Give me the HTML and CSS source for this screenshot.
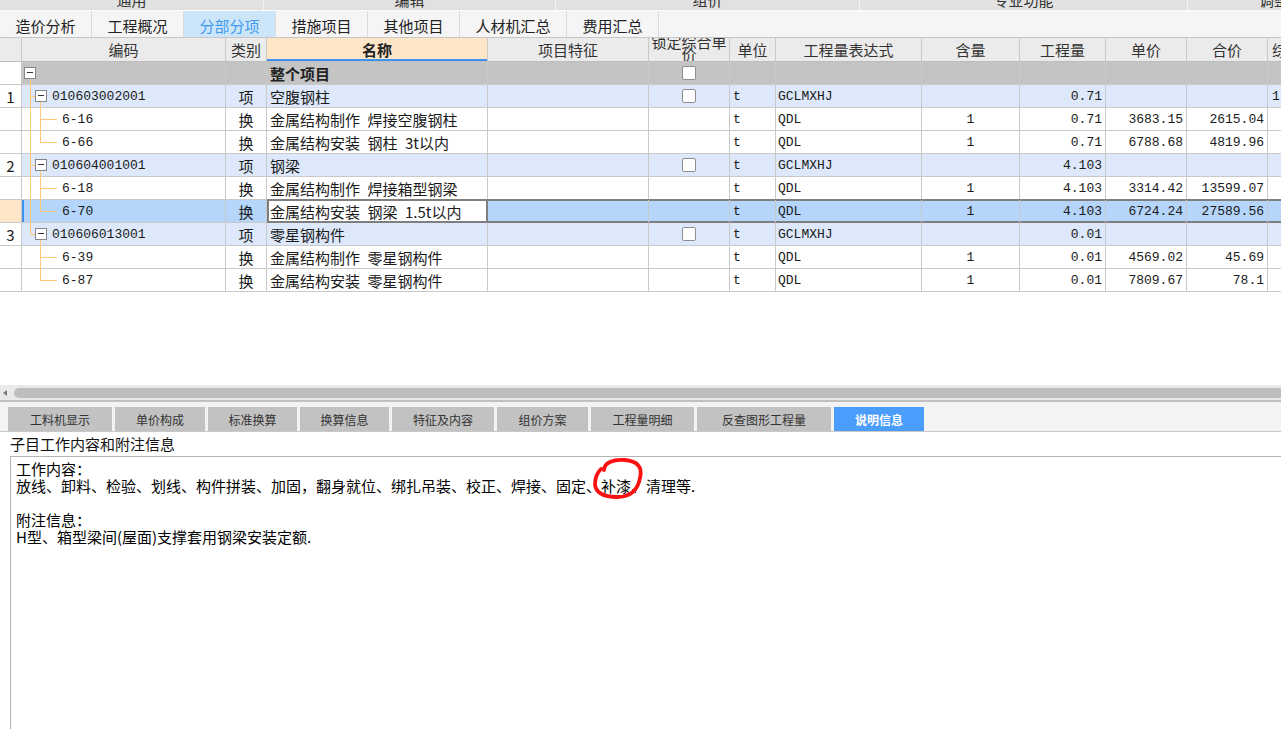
FILE: index.html
```html
<!DOCTYPE html>
<html lang="zh-CN">
<head>
<meta charset="utf-8">
<title>分部分项</title>
<link rel="stylesheet" href="styles.css">
</head>
<body>
<div class="app">
  <div class="ribbon">
    <div class="rg rg1"><span>通用</span></div>
    <div class="rg rg2"><span>编辑</span></div>
    <div class="rg rg3"><span>组价</span></div>
    <div class="rg rg4"><span>专业功能</span></div>
    <div class="rg rg5"><span>调整</span></div>
  </div>

  <div class="tabs">
    <div class="tab">造价分析</div>
    <div class="tab">工程概况</div>
    <div class="tab on">分部分项</div>
    <div class="tab">措施项目</div>
    <div class="tab">其他项目</div>
    <div class="tab wide">人材机汇总</div>
    <div class="tab">费用汇总</div>
  </div>

  <div class="grid">
    <div class="row head">
      <div class="c n"></div>
      <div class="c ctr">编码</div>
      <div class="c ctr">类别</div>
      <div class="c ctr hl">名称</div>
      <div class="c ctr">项目特征</div>
      <div class="c ctr lockh"><span>锁定综合单价</span></div>
      <div class="c ctr">单位</div>
      <div class="c ctr">工程量表达式</div>
      <div class="c ctr">含量</div>
      <div class="c ctr">工程量</div>
      <div class="c ctr">单价</div>
      <div class="c ctr">合价</div>
      <div class="c x">综合单价</div>
    </div>

    <div class="row r-root">
      <div class="c n"></div>
      <div class="c code"><i class="box rootbox"></i><i class="tl v1 from-root"></i></div>
      <div class="c"></div>
      <div class="c l"><b class="bold">整个项目</b></div>
      <div class="c"></div>
      <div class="c ctr"><i class="cb"></i></div>
      <div class="c"></div>
      <div class="c"></div>
      <div class="c"></div>
      <div class="c"></div>
      <div class="c"></div>
      <div class="c"></div>
      <div class="c"></div>
    </div>

    <div class="row r-grp">
      <div class="c n ctr">1</div>
      <div class="c code grp"><i class="tl v1"></i><i class="tl h1"></i><i class="box"></i><i class="tl v2b"></i><span class="mono">010603002001</span></div>
      <div class="c ctr">项</div>
      <div class="c l">空腹钢柱</div>
      <div class="c"></div>
      <div class="c ctr"><i class="cb"></i></div>
      <div class="c l mono">t</div>
      <div class="c l2 mono">GCLMXHJ</div>
      <div class="c"></div>
      <div class="c r mono">0.71</div>
      <div class="c"></div>
      <div class="c"></div>
      <div class="c x mono">1</div>
    </div>

    <div class="row">
      <div class="c n"></div>
      <div class="c code kid"><i class="tl v1"></i><i class="tl v2"></i><i class="tl h2"></i><span class="mono">6-16</span></div>
      <div class="c ctr">换</div>
      <div class="c l">金属结构制作&ensp;焊接空腹钢柱</div>
      <div class="c"></div>
      <div class="c"></div>
      <div class="c l mono">t</div>
      <div class="c l2 mono">QDL</div>
      <div class="c ctr mono">1</div>
      <div class="c r mono">0.71</div>
      <div class="c r mono">3683.15</div>
      <div class="c r mono">2615.04</div>
      <div class="c"></div>
    </div>

    <div class="row">
      <div class="c n"></div>
      <div class="c code kid"><i class="tl v1"></i><i class="tl v2 half"></i><i class="tl h2"></i><span class="mono">6-66</span></div>
      <div class="c ctr">换</div>
      <div class="c l">金属结构安装&ensp;钢柱&ensp;3t以内</div>
      <div class="c"></div>
      <div class="c"></div>
      <div class="c l mono">t</div>
      <div class="c l2 mono">QDL</div>
      <div class="c ctr mono">1</div>
      <div class="c r mono">0.71</div>
      <div class="c r mono">6788.68</div>
      <div class="c r mono">4819.96</div>
      <div class="c"></div>
    </div>

    <div class="row r-grp">
      <div class="c n ctr">2</div>
      <div class="c code grp"><i class="tl v1"></i><i class="tl h1"></i><i class="box"></i><i class="tl v2b"></i><span class="mono">010604001001</span></div>
      <div class="c ctr">项</div>
      <div class="c l">钢梁</div>
      <div class="c"></div>
      <div class="c ctr"><i class="cb"></i></div>
      <div class="c l mono">t</div>
      <div class="c l2 mono">GCLMXHJ</div>
      <div class="c"></div>
      <div class="c r mono">4.103</div>
      <div class="c"></div>
      <div class="c"></div>
      <div class="c"></div>
    </div>

    <div class="row">
      <div class="c n"></div>
      <div class="c code kid"><i class="tl v1"></i><i class="tl v2"></i><i class="tl h2"></i><span class="mono">6-18</span></div>
      <div class="c ctr">换</div>
      <div class="c l">金属结构制作&ensp;焊接箱型钢梁</div>
      <div class="c"></div>
      <div class="c"></div>
      <div class="c l mono">t</div>
      <div class="c l2 mono">QDL</div>
      <div class="c ctr mono">1</div>
      <div class="c r mono">4.103</div>
      <div class="c r mono">3314.42</div>
      <div class="c r mono">13599.07</div>
      <div class="c"></div>
    </div>

    <div class="row sel">
      <div class="c n"></div>
      <div class="c code kid cur"><i class="tl v1"></i><i class="tl v2 half"></i><i class="tl h2"></i><span class="mono">6-70</span></div>
      <div class="c ctr">换</div>
      <div class="c l edit">金属结构安装&ensp;钢梁&ensp;1.5t以内</div>
      <div class="c dk"></div>
      <div class="c dk"></div>
      <div class="c l mono dk">t</div>
      <div class="c l2 mono dk">QDL</div>
      <div class="c ctr mono dk">1</div>
      <div class="c r mono dk">4.103</div>
      <div class="c r mono dk">6724.24</div>
      <div class="c r mono dk">27589.56</div>
      <div class="c dk"></div>
    </div>

    <div class="row r-grp">
      <div class="c n ctr">3</div>
      <div class="c code grp"><i class="tl v1 half"></i><i class="tl h1"></i><i class="box"></i><i class="tl v2b"></i><span class="mono">010606013001</span></div>
      <div class="c ctr">项</div>
      <div class="c l">零星钢构件</div>
      <div class="c"></div>
      <div class="c ctr"><i class="cb"></i></div>
      <div class="c l mono">t</div>
      <div class="c l2 mono">GCLMXHJ</div>
      <div class="c"></div>
      <div class="c r mono">0.01</div>
      <div class="c"></div>
      <div class="c"></div>
      <div class="c"></div>
    </div>

    <div class="row">
      <div class="c n"></div>
      <div class="c code kid"><i class="tl v2"></i><i class="tl h2"></i><span class="mono">6-39</span></div>
      <div class="c ctr">换</div>
      <div class="c l">金属结构制作&ensp;零星钢构件</div>
      <div class="c"></div>
      <div class="c"></div>
      <div class="c l mono">t</div>
      <div class="c l2 mono">QDL</div>
      <div class="c ctr mono">1</div>
      <div class="c r mono">0.01</div>
      <div class="c r mono">4569.02</div>
      <div class="c r mono">45.69</div>
      <div class="c"></div>
    </div>

    <div class="row">
      <div class="c n"></div>
      <div class="c code kid"><i class="tl v2 half"></i><i class="tl h2"></i><span class="mono">6-87</span></div>
      <div class="c ctr">换</div>
      <div class="c l">金属结构安装&ensp;零星钢构件</div>
      <div class="c"></div>
      <div class="c"></div>
      <div class="c l mono">t</div>
      <div class="c l2 mono">QDL</div>
      <div class="c ctr mono">1</div>
      <div class="c r mono">0.01</div>
      <div class="c r mono">7809.67</div>
      <div class="c r mono">78.1</div>
      <div class="c"></div>
    </div>
  </div>

  <div class="hscroll">
    <div class="hs-track"><i class="hs-arrow"></i><div class="hs-thumb"></div></div>
  </div>

  <div class="panel">
    <div class="ptabs">
      <div class="ptab w104">工料机显示</div>
      <div class="ptab w90">单价构成</div>
      <div class="ptab w89">标准换算</div>
      <div class="ptab w89">换算信息</div>
      <div class="ptab w102">特征及内容</div>
      <div class="ptab w91">组价方案</div>
      <div class="ptab w103">工程量明细</div>
      <div class="ptab w134">反查图形工程量</div>
      <div class="ptab w90 on">说明信息</div>
    </div>
    <div class="label">子目工作内容和附注信息</div>
    <div class="note">
      <p>工作内容：</p>
      <p>放线、卸料、检验、划线、构件拼装、加固，翻身就位、绑扎吊装、校正、焊接、固定、补漆、清理等.</p>
      <p class="blank"></p>
      <p>附注信息：</p>
      <p>H型、箱型梁间(屋面)支撑套用钢梁安装定额.</p>
      <svg class="mark" viewBox="581 457 70 45" width="70" height="45" aria-hidden="true">
        <path d="M604 470 C604 463 613 459 625 460 C637 461 643 467 640 478 C638 489 631 497 617 497 C603 497 595 492 595 484 C595 478 597 473 601 469" fill="none" stroke="#ff1010" stroke-width="3.8" stroke-linecap="round" stroke-linejoin="round"/>
      </svg>
    </div>
  </div>
</div>
</body>
</html>
```
FILE: styles.css
```css
* { box-sizing: border-box; }
html, body { margin: 0; padding: 0; }
body {
  width: 1281px;
  height: 729px;
  overflow: hidden;
  background: #fff;
  font-family: "Noto Sans CJK SC", "Microsoft YaHei", sans-serif;
  color: #1a1a1a;
}
.app { display: flex; flex-direction: column; height: 729px; }

/* ribbon group captions (cut off at top) */
.ribbon { display: flex; height: 10px; background: #e1e1e1; overflow: hidden; flex: none; }
.rg {
  flex: none;
  display: flex;
  justify-content: center;
  align-items: flex-end;
  border-right: 1px solid #f3f3f3;
  overflow: hidden;
  font-size: 15px;
  line-height: 15px;
  color: #333;
}
.rg span { margin-bottom: 3px; }
.rg1 { width: 264px; }
.rg2 { width: 292px; }
.rg3 { width: 304px; }
.rg4 { width: 328px; }
.rg5 { width: 172px; border-right: none; }

/* top tabs */
.tabs {
  display: flex;
  flex: none;
  height: 28px;
  background: #f5f5f5;
  border-top: 1px solid #fbfbfb;
  border-bottom: 1px solid #c6c6c6;
}
.tab {
  width: 92px;
  border-right: 1px solid #dadada;
  display: flex;
  align-items: center;
  justify-content: center;
  padding-top: 2px;
  font-size: 15px;
  color: #222;
}
.tab.wide { width: 107px; }
.tab.on { background: #cce5f8; color: #3d9af0; }

/* grid */
.grid { flex: none; height: 347px; overflow: hidden; background: #fff; }
.row {
  display: grid;
  grid-template-columns: 22px 204px 41px 221px 161px 81px 46px 146px 98px 86px 81px 81px 80px;
  height: 23px;
}
.row.head { height: 24px; }
.c {
  position: relative;
  display: flex;
  align-items: center;
  overflow: hidden;
  white-space: nowrap;
  border-right: 1px solid #c9c9c9;
  border-bottom: 1px solid #c9c9c9;
  font-size: 15px;
  color: #1a1a1a;
  background: #fff;
}
.head .c { background: #ebebeb; color: #333; border-bottom-color: #bdbdbd; }
.head .c.hl { background: #fde6c8; color: #222; font-weight: bold; box-shadow: inset 0 -2px 0 #3f93f0; }
.head .lockh {
  white-space: normal;
  align-items: flex-end;
  line-height: 12px;
  padding-bottom: 1px;
  text-align: center;
}
.head .lockh span { display: block; width: 100%; word-break: break-all; }
.ctr { justify-content: center; }
.l { padding-left: 3px; }
.l2 { padding-left: 2px; }
.r { justify-content: flex-end; padding-right: 3px; }
.x { padding-left: 4px; }
.mono { font-family: "Liberation Mono", "Courier New", monospace; font-size: 13px; }
.bold { font-weight: bold; color: #222; }

.r-root .c { background: #c4c4c4; }
.r-root .c.n { background: #fff; }
.r-grp .c { background: #dde9fb; }
.r-grp .c.n { background: #fff; }
.sel .c { background: #b5d5fb; }
.sel .c.n { background: #fde6c7; }
.sel .c.cur { box-shadow: inset 2px 0 0 #3d8ff0; }
.sel .c.dk {
  border-bottom-color: #7f7f7f;
  box-shadow: 0 -1px 0 #7f7f7f, inset 0 1px 0 #7f7f7f, inset 0 -1px 0 #7f7f7f;
}
.sel .c.edit {
  background: #fff;
  border-bottom-color: #7f7f7f;
  border-right-color: #7f7f7f;
  box-shadow: 0 -1px 0 #7f7f7f, inset 0 1px 0 #7f7f7f, inset 0 -1px 0 #7f7f7f, inset 2px 0 0 #7f7f7f, inset -1px 0 0 #7f7f7f;
}

/* tree */
.code { overflow: visible; }
.code.grp { padding-left: 30px; }
.code.kid { padding-left: 40px; }
.tl { position: absolute; background: #ffc878; display: block; }
.tl.v1 { left: 8px; top: 0; bottom: -1px; width: 1px; }
.tl.v1.from-root { top: 17px; }
.tl.v1.half { bottom: auto; height: 12px; }
.tl.h1 { left: 8px; top: 11px; width: 5px; height: 1px; }
.tl.v2b { left: 18px; top: 17px; bottom: -1px; width: 1px; }
.tl.v2 { left: 18px; top: 0; bottom: -1px; width: 1px; }
.tl.v2.half { bottom: auto; height: 12px; }
.tl.h2 { left: 18px; top: 11px; width: 17px; height: 1px; }
.box {
  position: absolute;
  left: 13px;
  top: 5px;
  width: 12px;
  height: 12px;
  border: 1px solid #868686;
  background: #fff;
  display: block;
}
.box.rootbox { left: 2px; }
.box::after {
  content: "";
  position: absolute;
  left: 2px;
  top: 4px;
  width: 6px;
  height: 1px;
  background: #333;
}
.cb {
  display: block;
  width: 14px;
  height: 14px;
  border: 1px solid #8e8e8e;
  border-radius: 2px;
  background: #fff;
}

/* horizontal scrollbar */
.hscroll {
  flex: none;
  height: 17px;
  background: #e9e9e9;
  padding-top: 3px;
  border-bottom: 2px solid #c0c0c0;
}
.hs-track { height: 10px; display: flex; align-items: center; }
.hs-arrow {
  display: block;
  width: 0;
  height: 0;
  margin-left: 3px;
  margin-right: 7px;
  border-right: 4px solid #7a7a7a;
  border-top: 3px solid transparent;
  border-bottom: 3px solid transparent;
}
.hs-thumb { flex: 1; height: 10px; background: #bebebe; border-radius: 5px 0 0 5px; }

/* bottom panel */
.panel { flex: 1; display: flex; flex-direction: column; background: #fff; min-height: 0; }
.ptabs {
  flex: none;
  height: 30px;
  display: flex;
  gap: 3px;
  padding: 5px 0 0 8px;
  background: #f3f3f3;
  border-bottom: 1px solid #c8c8c8;
}
.ptab {
  height: 24px;
  display: flex;
  align-items: center;
  justify-content: center;
  background: #c2c2c2;
  font-size: 12px;
  color: #333;
}
.ptab.on { background: #4a9dfb; color: #fff; font-weight: bold; }
.w89 { width: 89px; }
.w90 { width: 90px; }
.w91 { width: 91px; }
.w102 { width: 102px; }
.w103 { width: 103px; }
.w104 { width: 104px; }
.w134 { width: 134px; }
.label {
  flex: none;
  height: 24px;
  line-height: 24px;
  padding-left: 10px;
  font-size: 15px;
  color: #111;
}
.note {
  flex: 1;
  position: relative;
  margin-left: 10px;
  border-top: 1px solid #b4b4b4;
  border-left: 1px solid #b4b4b4;
  padding: 3px 0 0 5px;
  font-size: 15px;
  line-height: 17px;
  color: #000;
}
.note p { margin: 0; white-space: nowrap; }
.note p.blank { height: 17px; }
.mark { position: absolute; left: 570px; top: 0; overflow: visible; }
```
